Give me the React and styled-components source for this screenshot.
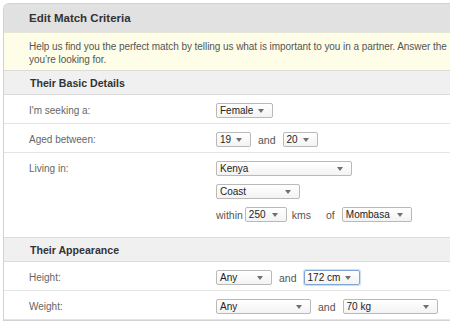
import React from 'react';
import styled, { createGlobalStyle } from 'styled-components';

const GlobalStyle = createGlobalStyle`
  body {
    margin: 0;
    overflow: hidden;
    background: #ffffff;
    font-family: "Liberation Sans", Arial, sans-serif;
  }
`;

const Panel = styled.div`
  margin: 3px 0 0 3px;
  width: 540px;
  border: 1px solid #d2d2d2;
  border-right: none;
  border-radius: 6px 0 0 0;
  overflow: hidden;
`;

const TitleBar = styled.div`
  height: 28px;
  display: flex;
  align-items: center;
  padding-left: 25px;
  background: #e1e1e1;
  font-size: 11.5px;
  font-weight: bold;
  color: #333;
`;

const Notice = styled.div`
  height: 38px;
  box-sizing: border-box;
  padding: 7px 0 0 25px;
  background: #fefde7;
  border-top: 1px solid #e6e6d6;
  font-size: 10px;
  letter-spacing: -0.06px;
  line-height: 13px;
  color: #555;
  white-space: nowrap;
`;

const SectionHeader = styled.div`
  height: 25px;
  box-sizing: border-box;
  display: flex;
  align-items: center;
  padding-left: 26px;
  background: #f0f0f0;
  border-top: 1px solid #dcdcdc;
  border-bottom: 1px solid #dcdcdc;
  font-size: 10.6px;
  font-weight: bold;
  color: #333;
`;

const Row = styled.div`
  display: grid;
  grid-template-columns: 212px 1fr;
  padding: 8px 0 ${p => p.$bottom || 5}px;
  border-bottom: ${p => (p.$last ? 'none' : '1px solid #e4e4e4')};
`;

const Label = styled.div`
  padding-left: 25px;
  height: 15px;
  line-height: 16px;
  font-size: 10px;
  color: #666;
`;

const Controls = styled.div`
  display: flex;
  flex-direction: column;
  gap: 8px;
`;

const Line = styled.div`
  display: flex;
  align-items: center;
  gap: ${p => p.$gap ?? 7}px;
  font-size: 10.5px;
  color: #555;
`;

const Word = styled.span`
  margin-right: ${p => p.$right || 0}px;
`;

const SelectBox = styled.div`
  position: relative;
  width: ${p => p.$width}px;
  height: 15px;
  box-sizing: border-box;
  padding-left: 3px;
  border: 1px solid ${p => (p.$focus ? '#7fa6d6' : '#b9b9b9')};
  box-shadow: ${p => (p.$focus ? '0 0 1px 1px #c6dbf3' : 'none')};
  border-radius: 2px;
  background: linear-gradient(#ffffff, #f3f3f3);
  font-size: 10px;
  line-height: 13px;
  color: #222;
`;

const Arrow = styled.span`
  position: absolute;
  right: 8px;
  top: 5px;
  width: 0;
  height: 0;
  border-left: 3.5px solid transparent;
  border-right: 3.5px solid transparent;
  border-top: 4px solid #707070;
`;

const Select = ({ width, value, focus }) => (
  <SelectBox $width={width} $focus={focus}>
    {value}
    <Arrow />
  </SelectBox>
);

export default function App() {
  return (
    <>
      <GlobalStyle />
      <Panel>
        <TitleBar>Edit Match Criteria</TitleBar>
        <Notice>
          Help us find you the perfect match by telling us what is important to you in a partner. Answer the
          <br />
          you’re looking for.
        </Notice>

        <SectionHeader>Their Basic Details</SectionHeader>
        <Row>
          <Label>I'm seeking a:</Label>
          <Line>
            <Select width={57} value="Female" />
          </Line>
        </Row>
        <Row>
          <Label>Aged between:</Label>
          <Line>
            <Select width={35} value="19" />
            <span>and</span>
            <Select width={35} value="20" />
          </Line>
        </Row>
        <Row $last $bottom={15}>
          <Label>Living in:</Label>
          <Controls>
            <Line>
              <Select width={136} value="Kenya" />
            </Line>
            <Line>
              <Select width={84} value="Coast" />
            </Line>
            <Line $gap={2}>
              <Word>within</Word>
              <Select width={42} value="250" />
              <Word $right={13}>&nbsp;kms</Word>
              <Word $right={5}>of</Word>
              <Select width={70} value="Mombasa" />
            </Line>
          </Controls>
        </Row>

        <SectionHeader>Their Appearance</SectionHeader>
        <Row>
          <Label>Height:</Label>
          <Line>
            <Select width={56} value="Any" />
            <span>and</span>
            <Select width={56} value="172 cm" focus />
          </Line>
        </Row>
        <Row>
          <Label>Weight:</Label>
          <Line>
            <Select width={95} value="Any" />
            <span>and</span>
            <Select width={95} value="70 kg" />
          </Line>
        </Row>
      </Panel>
    </>
  );
}
